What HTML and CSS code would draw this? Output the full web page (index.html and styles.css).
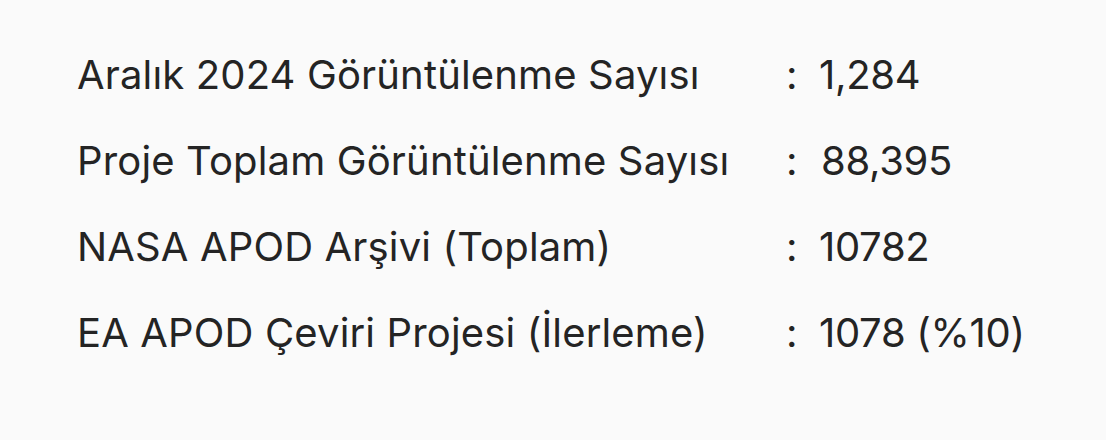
FILE: index.html
```html
<!DOCTYPE html>
<html lang="tr">
<head>
<meta charset="utf-8">
<link rel="stylesheet" href="styles.css">
</head>
<body>
<div class="stats">
  <div class="label">Aralık 2024 Görüntülenme Sayısı</div><div class="colon">:</div><div class="value">1,284</div>
  <div class="label">Proje Toplam Görüntülenme Sayısı</div><div class="colon">:</div><div class="value value-shift">88,395</div>
  <div class="label">NASA APOD Arşivi (Toplam)</div><div class="colon">:</div><div class="value">10782</div>
  <div class="label">EA APOD Çeviri Projesi (İlerleme)</div><div class="colon">:</div><div class="value">1078 (%10)</div>
</div>
</body>
</html>
```
FILE: styles.css
```css
html, body {
  margin: 0;
  padding: 0;
  background: #fafafa;
}
body {
  width: 1106px;
  height: 440px;
  font-family: "Inter", "Noto Sans", sans-serif;
  color: #242424;
}
.stats {
  display: grid;
  grid-template-columns: 709px 33px 1fr;
  padding: 50px 0 0 77px;
  row-gap: 36px;
  font-size: 40px;
  line-height: 50px;
}
.label {
  letter-spacing: 0.15px;
}
.value {
  letter-spacing: -0.3px;
}
.value-shift {
  padding-left: 2px;
}
```
